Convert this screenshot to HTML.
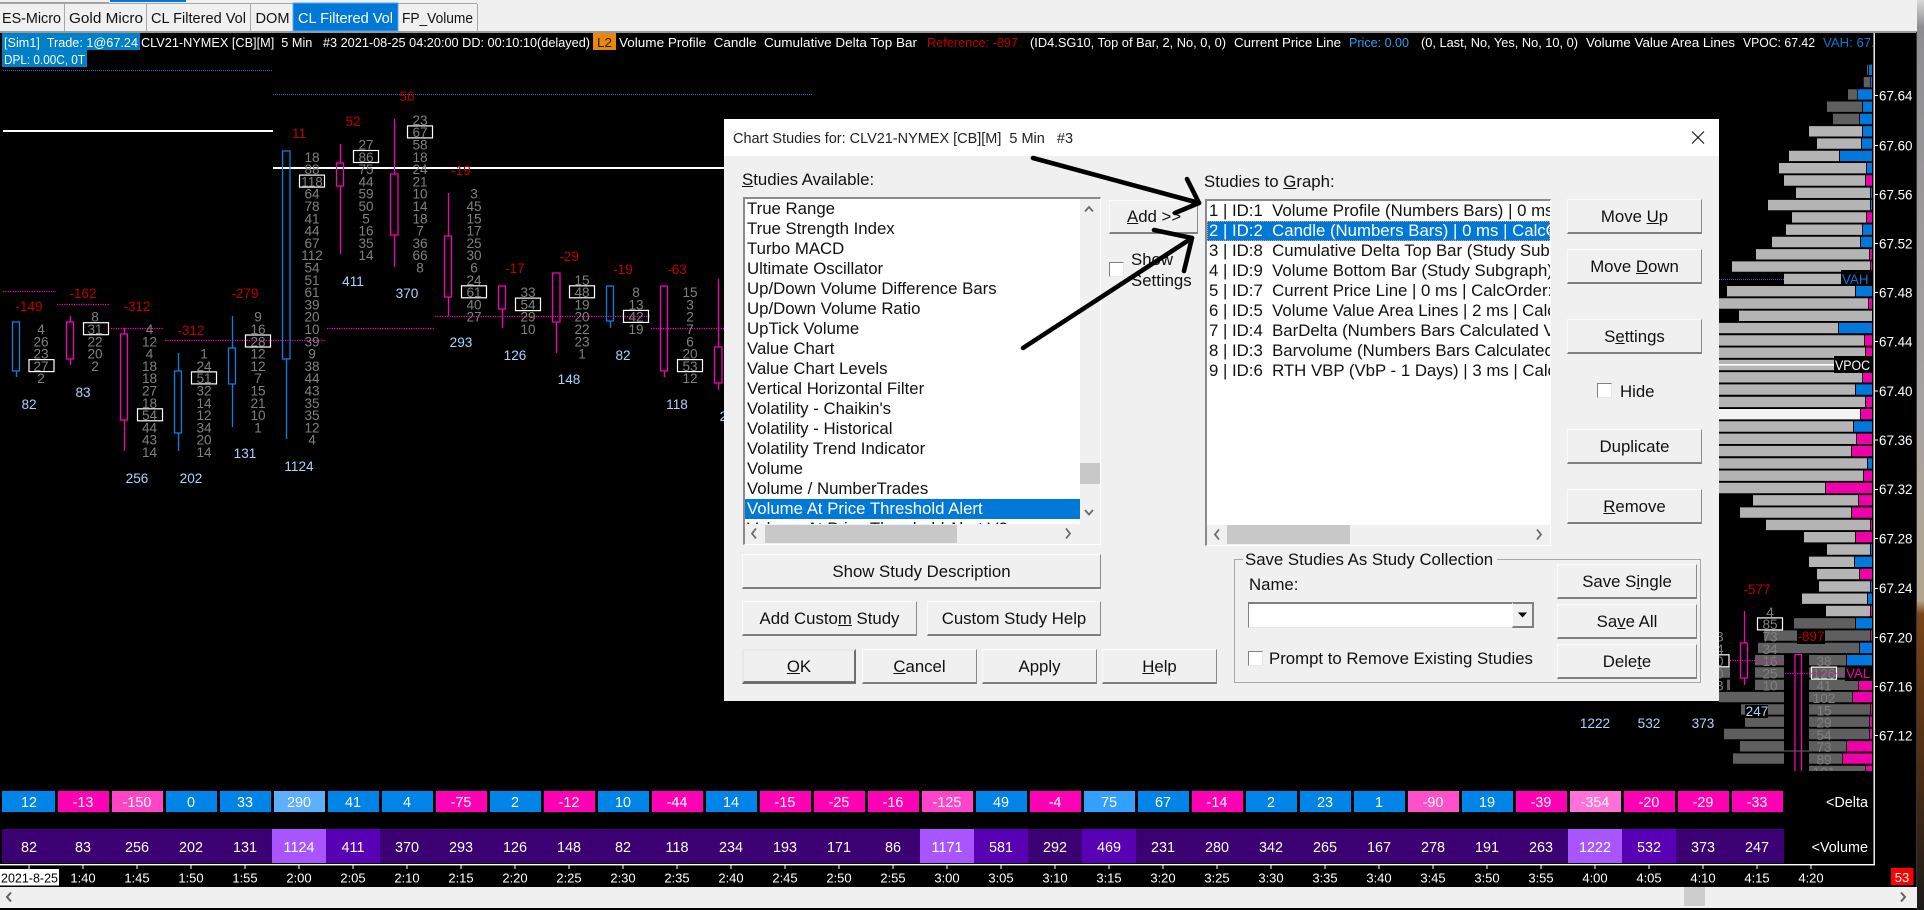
<!DOCTYPE html>
<html><head><meta charset="utf-8"><title>Chart Studies</title>
<style>
html,body{margin:0;padding:0;background:#000;width:1924px;height:910px;overflow:hidden}
body{position:relative;font-family:"Liberation Sans",sans-serif}
svg{position:absolute;left:0;top:0}
text{font-family:"Liberation Sans",sans-serif;white-space:pre}
.h{font-size:13.2px;fill:#fff}
.n{font-size:13.6px;fill:#808080;text-anchor:middle}
.d{font-size:13.4px;fill:#c00000;text-anchor:middle}
.t{font-size:13.6px;fill:#a8d4ff;text-anchor:middle}
.c{font-size:14.4px;fill:#fff;text-anchor:middle}
.x{font-size:13px;fill:#fff;text-anchor:middle}
.p{font-size:13.4px;fill:#fff}
.tb{font-size:14.4px;fill:#111}
.bx{fill:none;stroke:#fff;stroke-width:1.2}
.m{fill:none;stroke:#f400b8;stroke-width:1.3}
.bl{fill:none;stroke:#0a7fe0;stroke-width:1.3}
.dm{stroke:#ff00c0;stroke-width:1.2;stroke-dasharray:1.2 1.2}
.db{stroke:#0a78d8;stroke-width:1;stroke-dasharray:1 1}
#dlg{position:absolute;left:724px;top:119px;width:995px;height:582px;background:#f0f0f0}
#ttl{position:absolute;left:0;top:0;width:995px;height:37px;background:#fff}
.a{position:absolute;font-size:16.8px;color:#111;white-space:pre;line-height:20px;margin-top:1px}
.b{position:absolute;box-sizing:border-box;background:#f0f0f0;border:1px solid;border-color:#fbfbfb #8a8a8a #808080 #fbfbfb;border-bottom-width:2px;border-right-width:1px;text-align:center;font-size:16.8px;color:#111;line-height:33px;white-space:pre}
.lst{position:absolute;box-sizing:border-box;background:#f0f0f0;border:1px solid;border-color:#8a8a8a #fff #fff #8a8a8a;border-width:2px 1px 1px 2px}
.in{position:absolute;background:#fff;overflow:hidden;font-size:16.8px;line-height:20px;color:#111}
.in div{height:20px;padding-left:2px;white-space:pre}
.sel{background:#0078d7;color:#fff}
.th{position:absolute;background:#c8c8c8}
.ck{position:absolute;box-sizing:border-box;width:15px;height:15px;background:#fff;border:1px solid;border-color:#808080 #e8e8e8 #e8e8e8 #808080}
</style></head><body>

<svg width="1924" height="910" viewBox="0 0 1924 910">
<defs>
<linearGradient id="dk" x1="0" y1="0" x2="0" y2="1"><stop offset="0" stop-color="#d8d8d8"/><stop offset=".03" stop-color="#8e8e90"/><stop offset=".45" stop-color="#a8a4a4"/><stop offset=".66" stop-color="#b2a68e"/><stop offset=".675" stop-color="#7a4416"/><stop offset=".85" stop-color="#4a2c14"/><stop offset="1" stop-color="#1a1a1a"/></linearGradient>
<clipPath id="r55"><rect x="1700" y="600" width="180" height="171"/></clipPath>
<clipPath id="hd"><rect x="0" y="33" width="1873" height="20"/></clipPath>
</defs>

<!-- top bar -->
<rect x="0" y="0" width="1917" height="32" fill="#f0f0f0"/>
<rect x="0" y="2" width="109" height="1" fill="#a0a0a0"/>
<rect x="110" y="0" width="76" height="2" fill="#0078d7"/>
<rect x="0" y="31" width="1917" height="2" fill="#9a9a9a"/>
<path d="M64.5 4V31M146.5 4V31M250.5 4V31M477.5 4V31M0 3.5H477" stroke="#a8a8a8" fill="none"/>
<rect x="293" y="3" width="105" height="28" fill="#0078d7" stroke="#5aa8e8"/>
<text class="tb" x="2" y="23" textLength="59" lengthAdjust="spacingAndGlyphs">ES-Micro</text>
<text class="tb" x="69" y="23" textLength="74" lengthAdjust="spacingAndGlyphs">Gold Micro</text>
<text class="tb" x="151" y="23" textLength="95" lengthAdjust="spacingAndGlyphs">CL Filtered Vol</text>
<text class="tb" x="255.5" y="23" textLength="34" lengthAdjust="spacingAndGlyphs">DOM</text>
<text class="tb" x="298" y="23" textLength="95" lengthAdjust="spacingAndGlyphs" style="fill:#fff">CL Filtered Vol</text>
<text class="tb" x="402" y="23" textLength="71" lengthAdjust="spacingAndGlyphs">FP_Volume</text>

<!-- desktop edge -->
<rect x="1917" y="0" width="7" height="910" fill="url(#dk)"/>
<rect x="1916" y="32" width="1" height="877" fill="#333"/>

<!-- chart header -->
<rect x="2" y="33" width="138" height="17" fill="#0080c8"/>
<rect x="2" y="50" width="85" height="17" fill="#0080c8"/>
<rect x="593" y="33" width="23" height="17" fill="#e8870a"/>
<g clip-path="url(#hd)">
<text class="h" x="4" y="47" textLength="134" lengthAdjust="spacingAndGlyphs">[Sim1]  Trade: 1@67.24</text>
<text class="h" x="141" y="47" textLength="449" lengthAdjust="spacingAndGlyphs">CLV21-NYMEX [CB][M]  5 Min   #3 2021-08-25 04:20:00 DD: 00:10:10(delayed)</text>
<text class="h" x="597" y="47" textLength="15" lengthAdjust="spacingAndGlyphs" style="fill:#222">L2</text>
<text class="h" x="619" y="47" textLength="298" lengthAdjust="spacingAndGlyphs">Volume Profile  Candle  Cumulative Delta Top Bar</text>
<text class="h" x="927" y="47" textLength="91" lengthAdjust="spacingAndGlyphs" style="fill:#c00000">Reference: -897</text>
<text class="h" x="1030" y="47" textLength="196" lengthAdjust="spacingAndGlyphs">(ID4.SG10, Top of Bar, 2, No, 0, 0)</text>
<text class="h" x="1234" y="47" textLength="107" lengthAdjust="spacingAndGlyphs">Current Price Line</text>
<text class="h" x="1349" y="47" textLength="60" lengthAdjust="spacingAndGlyphs" style="fill:#2f9cf0">Price: 0.00</text>
<text class="h" x="1421" y="47" textLength="157" lengthAdjust="spacingAndGlyphs">(0, Last, No, Yes, No, 10, 0)</text>
<text class="h" x="1586" y="47" textLength="149" lengthAdjust="spacingAndGlyphs">Volume Value Area Lines</text>
<text class="h" x="1743" y="47" textLength="72" lengthAdjust="spacingAndGlyphs">VPOC: 67.42</text>
<text class="h" x="1823" y="47" style="fill:#0a78d8">VAH: 67.50</text>
</g>
<text class="h" x="4" y="64" textLength="81" lengthAdjust="spacingAndGlyphs">DPL: 0.00C, 0T</text>

<!-- horizontal lines -->
<path class="db" d="M3 70.5H272M273 94.5H812M1719 279.5H1841" fill="none"/>
<rect x="3" y="130" width="270" height="2" fill="#fff"/>
<rect x="273" y="167" width="460" height="2" fill="#fff"/>
<path class="dm" d="M3 291.5H56M57 304.5H110M111 328.5H164M165 340.5H326M327 328.5H434M435 316.5H650M651 328.5H730" fill="none"/>

<!-- volume profile -->
<path fill="#b4b4b4" d="M1809 126.1H1862v10.4H1809zM1817 138.4H1861v10.4H1817zM1789 150.7H1839v10.4H1789zM1779 163H1866v10.4H1779zM1784 175.3H1865v10.4H1784zM1796 187.6H1870v10.4H1796zM1768 199.9H1870v10.4H1768zM1792 212.2H1866v10.4H1792zM1786 224.5H1862v10.4H1786zM1772 236.8H1860v10.4H1772zM1756 249.1H1869v10.4H1756zM1732 261.4H1870v10.4H1732zM1784 273.7H1841v10.4H1784zM1727 286H1855v10.4H1727zM1719 298.3H1868v10.4H1719zM1739 310.6H1872v10.4H1739zM1719 322.9H1838v10.4H1719zM1719 335.2H1864v10.4H1719zM1719 347.5H1865v10.4H1719zM1719 359.8H1834v10.4H1719zM1719 372.1H1862v10.4H1719zM1719 384.4H1855v10.4H1719zM1719 396.7H1865v10.4H1719zM1719 421.3H1853v10.4H1719zM1719 433.6H1856v10.4H1719zM1719 445.9H1851v10.4H1719zM1719 458.2H1867v10.4H1719zM1719 470.5H1863v10.4H1719zM1719 482.8H1825v10.4H1719zM1753 495.1H1858v10.4H1753zM1740 507.4H1851v10.4H1740zM1766 519.7H1870v10.4H1766zM1804 532H1855v10.4H1804zM1827 544.3H1870v10.4H1827zM1809 556.6H1854v10.4H1809zM1817 568.9H1859v10.4H1817zM1819 581.2H1870v10.4H1819zM1802 593.5H1867v10.4H1802zM1826 605.8H1870v10.4H1826z"/>
<path fill="#f4f4f4" d="M1719 409H1860v10.4H1719z"/>
<path fill="#5f5f5f" d="M1867 64.6H1868v10.4H1867zM1863.7 76.9H1870.3v10.4H1863.7zM1848 89.2H1857.3v10.4H1848zM1827 101.5H1862v10.4H1827zM1833 113.8H1859v10.4H1833zM1794 618.1H1855v10.4H1794zM1764 630.4H1870v10.4H1764zM1758 642.7H1859v10.4H1758zM1755 655H1784v10.4H1755zM1809 655H1846v10.4H1809zM1755 667.3H1784v10.4H1755zM1719 667.3H1730v10.4H1719zM1809 667.3H1845v10.4H1809zM1727 679.6H1730v10.4H1727zM1755 679.6H1784v10.4H1755zM1809 679.6H1858v10.4H1809zM1719 691.9H1784v10.4H1719zM1809 691.9H1852v10.4H1809zM1741 704.2H1784v10.4H1741zM1809 704.2H1870v10.4H1809zM1745 716.5H1784v10.4H1745zM1809 716.5H1869v10.4H1809zM1724 728.8H1784v10.4H1724zM1809 728.8H1869v10.4H1809zM1740 741.1H1784v10.4H1740zM1809 741.1H1846v10.4H1809zM1733 753.4H1784v10.4H1733zM1809 753.4H1842v10.4H1809zM1809 765.7H1865v5.3H1809z"/>
<path fill="#0078dc" d="M1869 64.6H1872v10.4H1869zM1871 76.9H1872v10.4H1871zM1858 89.2H1872v10.4H1858zM1863 101.5H1872v10.4H1863zM1860 113.8H1872v10.4H1860zM1863 126.1H1872v10.4H1863zM1862 138.4H1872v10.4H1862zM1840 150.7H1872v10.4H1840zM1867 163H1872v10.4H1867zM1871 187.6H1872v10.4H1871zM1871 199.9H1872v10.4H1871zM1863 224.5H1872v10.4H1863zM1861 236.8H1872v10.4H1861zM1856 286H1872v10.4H1856zM1839 322.9H1872v10.4H1839zM1856 384.4H1872v10.4H1856zM1854 421.3H1872v10.4H1854zM1868 458.2H1872v10.4H1868zM1871 544.3H1872v10.4H1871zM1855 556.6H1872v10.4H1855zM1871 581.2H1872v10.4H1871zM1868 593.5H1872v10.4H1868zM1856 618.1H1872v10.4H1856zM1860 642.7H1872v10.4H1860zM1847 655H1872v10.4H1847z"/>
<path fill="#f000a8" d="M1866 175.3H1872v10.4H1866zM1867 212.2H1872v10.4H1867zM1870 249.1H1872v10.4H1870zM1871 261.4H1872v10.4H1871zM1869 298.3H1872v10.4H1869zM1865 335.2H1872v10.4H1865zM1866 347.5H1872v10.4H1866zM1863 372.1H1872v10.4H1863zM1866 396.7H1872v10.4H1866zM1861 409H1872v10.4H1861zM1857 433.6H1872v10.4H1857zM1852 445.9H1872v10.4H1852zM1864 470.5H1872v10.4H1864zM1826 482.8H1872v10.4H1826zM1859 495.1H1872v10.4H1859zM1852 507.4H1872v10.4H1852zM1871 519.7H1872v10.4H1871zM1856 532H1872v10.4H1856zM1860 568.9H1872v10.4H1860zM1871 605.8H1872v10.4H1871zM1871 630.4H1872v10.4H1871zM1859 679.6H1872v10.4H1859zM1853 691.9H1872v10.4H1853zM1871 704.2H1872v10.4H1871zM1870 716.5H1872v10.4H1870zM1870 728.8H1872v10.4H1870zM1847 741.1H1872v10.4H1847zM1843 753.4H1872v10.4H1843zM1866 765.7H1872v5.3H1866z"/>
<rect x="1719" y="364" width="115" height="1.6" fill="#fff"/>

<!-- candles -->
<g class="bl">
<rect x="12.5" y="322" width="7" height="49"/><path d="M16.5 371V377"/>
<rect x="174.5" y="371" width="7" height="62"/><path d="M178.5 353V371M178.5 433V451"/>
<rect x="228.5" y="348" width="7" height="36"/><path d="M232.5 316V348M232.5 384V427"/>
<rect x="282.5" y="151" width="7.5" height="208"/><path d="M286.5 359V439"/>
<rect x="606.5" y="286" width="7" height="35"/><path d="M610.5 321V328"/>
</g>
<g class="m">
<rect x="66.5" y="322" width="7" height="37"/><path d="M70.5 316V322M70.5 359V365"/>
<rect x="120.5" y="334" width="7" height="86"/><path d="M124.5 328V334M124.5 420V451"/>
<rect x="336.5" y="163" width="7" height="23"/><path d="M340.5 144V163M340.5 186V254"/>
<rect x="390.5" y="174" width="7.5" height="61"/><path d="M394.5 119V174M394.5 235V267"/>
<rect x="444.5" y="236" width="7" height="61"/><path d="M448.5 193V236M448.5 297V316"/>
<rect x="498.5" y="286" width="7" height="23"/><path d="M502.5 309V328"/>
<rect x="552.5" y="273" width="7.5" height="49"/><path d="M556.5 322V353"/>
<rect x="660.5" y="286" width="7" height="85"/><path d="M664.5 371V377"/>
<rect x="714.5" y="347" width="7.5" height="36"/><path d="M718.5 279V347M718.5 383V390"/>
<rect x="1740.5" y="643" width="7" height="35"/><path d="M1744.5 611V643M1744.5 678V685"/>
<path d="M1795 771V654.5H1801.5V771"/>
</g>
<rect x="1784" y="750.5" width="25" height="1" fill="#666"/>

<!-- numbers -->
<text class="n" y="334"><tspan x="41">4</tspan><tspan x="41" dy="12.3">26</tspan><tspan x="41" dy="12.3">23</tspan><tspan x="41" dy="12.3">27</tspan><tspan x="41" dy="12.3">2</tspan></text>
<text class="n" y="321.7"><tspan x="95">8</tspan><tspan x="95" dy="12.3">31</tspan><tspan x="95" dy="12.3">22</tspan><tspan x="95" dy="12.3">20</tspan><tspan x="95" dy="12.3">2</tspan></text>
<text class="n" y="334"><tspan x="149.5">4</tspan><tspan x="149.5" dy="12.3">12</tspan><tspan x="149.5" dy="12.3">4</tspan><tspan x="149.5" dy="12.3">18</tspan><tspan x="149.5" dy="12.3">18</tspan><tspan x="149.5" dy="12.3">27</tspan><tspan x="149.5" dy="12.3">18</tspan><tspan x="149.5" dy="12.3">54</tspan><tspan x="149.5" dy="12.3">44</tspan><tspan x="149.5" dy="12.3">43</tspan><tspan x="149.5" dy="12.3">14</tspan></text>
<text class="n" y="358.6"><tspan x="204">1</tspan><tspan x="204" dy="12.3">24</tspan><tspan x="204" dy="12.3">51</tspan><tspan x="204" dy="12.3">32</tspan><tspan x="204" dy="12.3">14</tspan><tspan x="204" dy="12.3">12</tspan><tspan x="204" dy="12.3">34</tspan><tspan x="204" dy="12.3">20</tspan><tspan x="204" dy="12.3">14</tspan></text>
<text class="n" y="321.7"><tspan x="258">9</tspan><tspan x="258" dy="12.3">16</tspan><tspan x="258" dy="12.3">28</tspan><tspan x="258" dy="12.3">12</tspan><tspan x="258" dy="12.3">12</tspan><tspan x="258" dy="12.3">7</tspan><tspan x="258" dy="12.3">15</tspan><tspan x="258" dy="12.3">21</tspan><tspan x="258" dy="12.3">10</tspan><tspan x="258" dy="12.3">1</tspan></text>
<text class="n" y="161.8"><tspan x="312">18</tspan><tspan x="312" dy="12.3">88</tspan><tspan x="312" dy="12.3">118</tspan><tspan x="312" dy="12.3">64</tspan><tspan x="312" dy="12.3">78</tspan><tspan x="312" dy="12.3">41</tspan><tspan x="312" dy="12.3">44</tspan><tspan x="312" dy="12.3">67</tspan><tspan x="312" dy="12.3">112</tspan><tspan x="312" dy="12.3">54</tspan><tspan x="312" dy="12.3">51</tspan><tspan x="312" dy="12.3">61</tspan><tspan x="312" dy="12.3">39</tspan><tspan x="312" dy="12.3">20</tspan><tspan x="312" dy="12.3">10</tspan><tspan x="312" dy="12.3">39</tspan><tspan x="312" dy="12.3">9</tspan><tspan x="312" dy="12.3">38</tspan><tspan x="312" dy="12.3">44</tspan><tspan x="312" dy="12.3">43</tspan><tspan x="312" dy="12.3">35</tspan><tspan x="312" dy="12.3">35</tspan><tspan x="312" dy="12.3">12</tspan><tspan x="312" dy="12.3">4</tspan></text>
<text class="n" y="149.5"><tspan x="366">27</tspan><tspan x="366" dy="12.3">86</tspan><tspan x="366" dy="12.3">75</tspan><tspan x="366" dy="12.3">44</tspan><tspan x="366" dy="12.3">59</tspan><tspan x="366" dy="12.3">50</tspan><tspan x="366" dy="12.3">5</tspan><tspan x="366" dy="12.3">16</tspan><tspan x="366" dy="12.3">35</tspan><tspan x="366" dy="12.3">14</tspan></text>
<text class="n" y="124.9"><tspan x="420">23</tspan><tspan x="420" dy="12.3">67</tspan><tspan x="420" dy="12.3">58</tspan><tspan x="420" dy="12.3">18</tspan><tspan x="420" dy="12.3">24</tspan><tspan x="420" dy="12.3">21</tspan><tspan x="420" dy="12.3">10</tspan><tspan x="420" dy="12.3">14</tspan><tspan x="420" dy="12.3">18</tspan><tspan x="420" dy="12.3">7</tspan><tspan x="420" dy="12.3">36</tspan><tspan x="420" dy="12.3">66</tspan><tspan x="420" dy="12.3">8</tspan></text>
<text class="n" y="198.7"><tspan x="474">3</tspan><tspan x="474" dy="12.3">45</tspan><tspan x="474" dy="12.3">15</tspan><tspan x="474" dy="12.3">17</tspan><tspan x="474" dy="12.3">25</tspan><tspan x="474" dy="12.3">30</tspan><tspan x="474" dy="12.3">6</tspan><tspan x="474" dy="12.3">24</tspan><tspan x="474" dy="12.3">61</tspan><tspan x="474" dy="12.3">40</tspan><tspan x="474" dy="12.3">27</tspan></text>
<text class="n" y="297.1"><tspan x="528">33</tspan><tspan x="528" dy="12.3">54</tspan><tspan x="528" dy="12.3">29</tspan><tspan x="528" dy="12.3">10</tspan></text>
<text class="n" y="284.8"><tspan x="582">15</tspan><tspan x="582" dy="12.3">48</tspan><tspan x="582" dy="12.3">19</tspan><tspan x="582" dy="12.3">20</tspan><tspan x="582" dy="12.3">22</tspan><tspan x="582" dy="12.3">23</tspan><tspan x="582" dy="12.3">1</tspan></text>
<text class="n" y="297.1"><tspan x="636">8</tspan><tspan x="636" dy="12.3">13</tspan><tspan x="636" dy="12.3">42</tspan><tspan x="636" dy="12.3">19</tspan></text>
<text class="n" y="297.1"><tspan x="690">15</tspan><tspan x="690" dy="12.3">3</tspan><tspan x="690" dy="12.3">2</tspan><tspan x="690" dy="12.3">7</tspan><tspan x="690" dy="12.3">6</tspan><tspan x="690" dy="12.3">20</tspan><tspan x="690" dy="12.3">53</tspan><tspan x="690" dy="12.3">12</tspan></text>
<text class="n" y="641.5"><tspan x="1716">13</tspan><tspan x="1716" dy="12.3">14</tspan><tspan x="1716" dy="12.3">70</tspan><tspan x="1716" dy="12.3">40</tspan><tspan x="1716" dy="12.3">13</tspan></text>
<text class="n" y="616.9"><tspan x="1770">4</tspan><tspan x="1770" dy="12.3">85</tspan><tspan x="1770" dy="12.3">73</tspan><tspan x="1770" dy="12.3">34</tspan><tspan x="1770" dy="12.3">16</tspan><tspan x="1770" dy="12.3">25</tspan><tspan x="1770" dy="12.3">10</tspan></text>
<g clip-path="url(#r55)"><text class="n" y="666.1"><tspan x="1824">38</tspan><tspan x="1824" dy="12.3">126</tspan><tspan x="1824" dy="12.3">41</tspan><tspan x="1824" dy="12.3">102</tspan><tspan x="1824" dy="12.3">15</tspan><tspan x="1824" dy="12.3">29</tspan><tspan x="1824" dy="12.3">54</tspan><tspan x="1824" dy="12.3">73</tspan><tspan x="1824" dy="12.3">89</tspan><tspan x="1824" dy="12.3">101</tspan></text></g>

<!-- POC boxes -->
<rect class="bx" x="29" y="359.6" width="25" height="12"/>
<rect class="bx" x="83.5" y="322.7" width="25" height="12"/>
<rect class="bx" x="137.5" y="408.8" width="25" height="12"/>
<rect class="bx" x="191.5" y="371.9" width="25" height="12"/>
<rect class="bx" x="245.5" y="335" width="25" height="12"/>
<rect class="bx" x="299.5" y="175.1" width="25" height="12"/>
<rect class="bx" x="353.5" y="150.5" width="25" height="12"/>
<rect class="bx" x="407.5" y="125.9" width="25" height="12"/>
<rect class="bx" x="461.5" y="285.8" width="25" height="12"/>
<rect class="bx" x="515.5" y="298.1" width="25" height="12.5"/>
<rect class="bx" x="569.5" y="285.8" width="25" height="12"/>
<rect class="bx" x="623.5" y="310.4" width="25" height="12"/>
<rect class="bx" x="677.5" y="359.6" width="25" height="12"/>
<rect class="bx" x="1703" y="654.8" width="26" height="12"/>
<rect class="bx" x="1757.5" y="617.9" width="25" height="12"/>
<rect class="bx" x="1811.5" y="667.1" width="25" height="12"/>
<path class="dm" d="M1730 660.5H1784M1785 673.5H1846" fill="none"/>

<!-- deltas -->
<text class="d" x="29" y="311">-149</text><text class="d" x="83" y="298">-162</text><text class="d" x="137" y="311">-312</text><text class="d" x="191" y="335">-312</text><text class="d" x="245" y="298">-279</text><text class="d" x="299" y="138">11</text><text class="d" x="353" y="126">52</text><text class="d" x="407" y="101">56</text><text class="d" x="461" y="175">-19</text><text class="d" x="515" y="273">-17</text><text class="d" x="569" y="261">-29</text><text class="d" x="623" y="274">-19</text><text class="d" x="677" y="274">-63</text><text class="d" x="1757" y="594">-577</text>

<!-- totals -->
<text class="t" x="29" y="409">82</text><text class="t" x="83" y="397">83</text><text class="t" x="137" y="483">256</text><text class="t" x="191" y="483">202</text><text class="t" x="245" y="458">131</text><text class="t" x="299" y="471">1124</text><text class="t" x="353" y="286">411</text><text class="t" x="407" y="298">370</text><text class="t" x="461" y="347">293</text><text class="t" x="515" y="360">126</text><text class="t" x="569" y="384">148</text><text class="t" x="623" y="360">82</text><text class="t" x="677" y="409">118</text><text class="t" x="731" y="421">234</text><text class="t" x="1595" y="728">1222</text><text class="t" x="1649" y="728">532</text><text class="t" x="1703" y="728">373</text>

<!-- labels on profile -->
<rect x="1841" y="270" width="31" height="16" fill="#000"/><text x="1842" y="284" style="font-size:13.4px;fill:#0a78d8">VAH</text>
<rect x="1834" y="356" width="38" height="17" fill="#000"/><text x="1835" y="370" textLength="35" lengthAdjust="spacingAndGlyphs" style="font-size:13.4px;fill:#fff">VPOC</text>
<rect x="1797" y="629" width="28" height="15" fill="#000"/><text x="1811" y="641" class="d">-897</text>
<rect x="1845" y="666" width="27" height="15" fill="#000"/><text x="1846" y="678" style="font-size:13.4px;fill:#f000a8">VAL</text>
<rect x="1745" y="705" width="23" height="13" fill="#000"/><text class="t" x="1757" y="716">247</text>

<!-- axis -->
<rect x="1873.5" y="33" width="1.4" height="832" fill="#fff"/>
<path d="M1875 95.5h3M1875 145.5h3M1875 194.5h3M1875 243.5h3M1875 292.5h3M1875 341.5h3M1875 391h3M1875 440h3M1875 489.5h3M1875 538.5h3M1875 588.5h3M1875 637.5h3M1875 686.5h3M1875 735.5h3" stroke="#fff"/>
<text class="p" x="1879" y="100.5">67.64</text><text class="p" x="1879" y="150.5">67.60</text><text class="p" x="1879" y="199.5">67.56</text><text class="p" x="1879" y="248.5">67.52</text><text class="p" x="1879" y="297.5">67.48</text><text class="p" x="1879" y="346.5">67.44</text><text class="p" x="1879" y="396">67.40</text><text class="p" x="1879" y="445">67.36</text><text class="p" x="1879" y="494">67.32</text><text class="p" x="1879" y="543.5">67.28</text><text class="p" x="1879" y="593">67.24</text><text class="p" x="1879" y="642.5">67.20</text><text class="p" x="1879" y="691.5">67.16</text><text class="p" x="1879" y="740.5">67.12</text>

<!-- delta row -->
<path fill="#0084e8" d="M2 791h53v21H2zM166 791h51v21h-51zM220 791h51v21h-51zM328 791h51v21h-51zM382 791h51v21h-51zM490 791h51v21h-51zM598 791h51v21h-51zM706 791h51v21h-51zM976 791h51v21h-51zM1138 791h51v21h-51zM1246 791h51v21h-51zM1300 791h51v21h-51zM1354 791h51v21h-51zM1462 791h51v21h-51z"/>
<path fill="#ff00b4" d="M58 791h51v21H58zM436 791h51v21h-51zM544 791h51v21h-51zM652 791h51v21h-51zM760 791h51v21h-51zM814 791h51v21h-51zM868 791h51v21h-51zM1030 791h51v21h-51zM1192 791h51v21h-51zM1516 791h51v21h-51zM1624 791h51v21h-51zM1678 791h51v21h-51zM1732 791h51v21h-51z"/>
<rect x="112" y="791" width="51" height="21" fill="#ff44c8"/>
<rect x="274" y="791" width="51" height="21" fill="#5cb0ff"/>
<rect x="922" y="791" width="51" height="21" fill="#ff44cc"/>
<rect x="1084" y="791" width="51" height="21" fill="#33a0ff"/>
<rect x="1408" y="791" width="51" height="21" fill="#ff50cc"/>
<rect x="1570" y="791" width="51" height="21" fill="#ff70d8"/>
<g class="c"><text class="c" x="29" y="807">12</text><text class="c" x="83" y="807">-13</text><text class="c" x="137" y="807">-150</text><text class="c" x="191" y="807">0</text><text class="c" x="245" y="807">33</text><text class="c" x="299" y="807">290</text><text class="c" x="353" y="807">41</text><text class="c" x="407" y="807">4</text><text class="c" x="461" y="807">-75</text><text class="c" x="515" y="807">2</text><text class="c" x="569" y="807">-12</text><text class="c" x="623" y="807">10</text><text class="c" x="677" y="807">-44</text><text class="c" x="731" y="807">14</text><text class="c" x="785" y="807">-15</text><text class="c" x="839" y="807">-25</text><text class="c" x="893" y="807">-16</text><text class="c" x="947" y="807">-125</text><text class="c" x="1001" y="807">49</text><text class="c" x="1055" y="807">-4</text><text class="c" x="1109" y="807">75</text><text class="c" x="1163" y="807">67</text><text class="c" x="1217" y="807">-14</text><text class="c" x="1271" y="807">2</text><text class="c" x="1325" y="807">23</text><text class="c" x="1379" y="807">1</text><text class="c" x="1433" y="807">-90</text><text class="c" x="1487" y="807">19</text><text class="c" x="1541" y="807">-39</text><text class="c" x="1595" y="807">-354</text><text class="c" x="1649" y="807">-20</text><text class="c" x="1703" y="807">-29</text><text class="c" x="1757" y="807">-33</text></g>
<text x="1868" y="807" text-anchor="end" style="font-size:14.4px;fill:#fff">&lt;Delta</text>

<!-- volume row -->
<rect x="2" y="829" width="1782" height="34" fill="#3b0072"/>
<path fill="#a855ff" d="M272 829h54v34h-54zM920 829h54v34h-54zM1568 829h54v34h-54z"/>
<path fill="#5800b4" d="M326 829h54v34h-54zM974 829h54v34h-54zM1082 829h54v34h-54zM1622 829h54v34h-54z"/>
<text class="c" x="29" y="852">82</text><text class="c" x="83" y="852">83</text><text class="c" x="137" y="852">256</text><text class="c" x="191" y="852">202</text><text class="c" x="245" y="852">131</text><text class="c" x="299" y="852">1124</text><text class="c" x="353" y="852">411</text><text class="c" x="407" y="852">370</text><text class="c" x="461" y="852">293</text><text class="c" x="515" y="852">126</text><text class="c" x="569" y="852">148</text><text class="c" x="623" y="852">82</text><text class="c" x="677" y="852">118</text><text class="c" x="731" y="852">234</text><text class="c" x="785" y="852">193</text><text class="c" x="839" y="852">171</text><text class="c" x="893" y="852">86</text><text class="c" x="947" y="852">1171</text><text class="c" x="1001" y="852">581</text><text class="c" x="1055" y="852">292</text><text class="c" x="1109" y="852">469</text><text class="c" x="1163" y="852">231</text><text class="c" x="1217" y="852">280</text><text class="c" x="1271" y="852">342</text><text class="c" x="1325" y="852">265</text><text class="c" x="1379" y="852">167</text><text class="c" x="1433" y="852">278</text><text class="c" x="1487" y="852">191</text><text class="c" x="1541" y="852">263</text><text class="c" x="1595" y="852">1222</text><text class="c" x="1649" y="852">532</text><text class="c" x="1703" y="852">373</text><text class="c" x="1757" y="852">247</text>
<text x="1868" y="852" text-anchor="end" style="font-size:14.4px;fill:#fff">&lt;Volume</text>

<!-- time axis -->
<rect x="0" y="864" width="1875" height="1.4" fill="#fff"/>
<path stroke="#fff" d="M29 865v4M83 865v4M137 865v4M191 865v4M245 865v4M299 865v4M353 865v4M407 865v4M461 865v4M515 865v4M569 865v4M623 865v4M677 865v4M731 865v4M785 865v4M839 865v4M893 865v4M947 865v4M1001 865v4M1055 865v4M1109 865v4M1163 865v4M1217 865v4M1271 865v4M1325 865v4M1379 865v4M1433 865v4M1487 865v4M1541 865v4M1595 865v4M1649 865v4M1703 865v4M1757 865v4M1811 865v4"/>
<rect x="0" y="869" width="59" height="16.5" fill="#fff"/>
<text x="1" y="882.5" textLength="57" lengthAdjust="spacingAndGlyphs" style="font-size:13px;fill:#000">2021-8-25</text>
<text class="x" x="83" y="882.5">1:40</text><text class="x" x="137" y="882.5">1:45</text><text class="x" x="191" y="882.5">1:50</text><text class="x" x="245" y="882.5">1:55</text><text class="x" x="299" y="882.5">2:00</text><text class="x" x="353" y="882.5">2:05</text><text class="x" x="407" y="882.5">2:10</text><text class="x" x="461" y="882.5">2:15</text><text class="x" x="515" y="882.5">2:20</text><text class="x" x="569" y="882.5">2:25</text><text class="x" x="623" y="882.5">2:30</text><text class="x" x="677" y="882.5">2:35</text><text class="x" x="731" y="882.5">2:40</text><text class="x" x="785" y="882.5">2:45</text><text class="x" x="839" y="882.5">2:50</text><text class="x" x="893" y="882.5">2:55</text><text class="x" x="947" y="882.5">3:00</text><text class="x" x="1001" y="882.5">3:05</text><text class="x" x="1055" y="882.5">3:10</text><text class="x" x="1109" y="882.5">3:15</text><text class="x" x="1163" y="882.5">3:20</text><text class="x" x="1217" y="882.5">3:25</text><text class="x" x="1271" y="882.5">3:30</text><text class="x" x="1325" y="882.5">3:35</text><text class="x" x="1379" y="882.5">3:40</text><text class="x" x="1433" y="882.5">3:45</text><text class="x" x="1487" y="882.5">3:50</text><text class="x" x="1541" y="882.5">3:55</text><text class="x" x="1595" y="882.5">4:00</text><text class="x" x="1649" y="882.5">4:05</text><text class="x" x="1703" y="882.5">4:10</text><text class="x" x="1757" y="882.5">4:15</text><text class="x" x="1811" y="882.5">4:20</text>
<rect x="1891" y="868" width="22.5" height="17" fill="#ff0000"/>
<text x="1902" y="882" text-anchor="middle" style="font-size:13px;fill:#fff">53</text>

<!-- bottom scrollbar -->
<rect x="0" y="887" width="1917" height="21" fill="#f0f0f0"/>
<rect x="1684" y="887" width="21" height="19" fill="#cdcdcd"/>
<path d="M11 892.5L7 897L11 901.5M1901 892.5L1905 897L1901 901.5" stroke="#606060" stroke-width="2" fill="none"/>
</svg>

<div id="dlg">
<div id="ttl"></div>
</div>

<div class="a" style="left:742px;top:169px"><u>S</u>tudies Available:</div>
<div class="a" style="left:1204px;top:171px">Studies to <u>G</u>raph:</div>

<div class="lst" style="left:743px;top:197px;width:358px;height:348px"></div>
<div class="in" style="left:745px;top:199px;width:334.5px;height:325px">
<div>True Range</div>
<div>True Strength Index</div>
<div>Turbo MACD</div>
<div>Ultimate Oscillator</div>
<div>Up/Down Volume Difference Bars</div>
<div>Up/Down Volume Ratio</div>
<div>UpTick Volume</div>
<div>Value Chart</div>
<div>Value Chart Levels</div>
<div>Vertical Horizontal Filter</div>
<div>Volatility - Chaikin's</div>
<div>Volatility - Historical</div>
<div>Volatility Trend Indicator</div>
<div>Volume</div>
<div>Volume / NumberTrades</div>
<div class="sel">Volume At Price Threshold Alert</div>
<div>Volume At Price Threshold Alert V2</div>
</div>
<div class="th" style="left:1080px;top:463px;width:19.5px;height:21px"></div>
<div class="th" style="left:765px;top:525px;width:192px;height:18px"></div>

<div class="lst" style="left:1205px;top:199px;width:346px;height:347px"></div>
<div class="in" style="left:1207px;top:201px;width:343px;height:324px">
<div>1 | ID:1  Volume Profile (Numbers Bars) | 0 ms | CalcOrder: 1</div>
<div class="sel" style="outline:1px dotted #f0a060;outline-offset:-1px">2 | ID:2  Candle (Numbers Bars) | 0 ms | CalcOrder: 2</div>
<div>3 | ID:8  Cumulative Delta Top Bar (Study Subgraph)</div>
<div>4 | ID:9  Volume Bottom Bar (Study Subgraph) | 0 ms</div>
<div>5 | ID:7  Current Price Line | 0 ms | CalcOrder: 5</div>
<div>6 | ID:5  Volume Value Area Lines | 2 ms | CalcOrder: 6</div>
<div>7 | ID:4  BarDelta (Numbers Bars Calculated Values)</div>
<div>8 | ID:3  Barvolume (Numbers Bars Calculated Values)</div>
<div>9 | ID:6  RTH VBP (VbP - 1 Days) | 3 ms | CalcOrder: 9</div>
</div>
<div class="th" style="left:1227px;top:525px;width:123px;height:19px"></div>

<div class="b" style="left:1109px;top:200px;width:89px;height:34px;line-height:32px;text-align:left;padding-left:17px"><u>A</u>dd &gt;&gt;</div>
<div class="ck" style="left:1109px;top:262px"></div>
<div class="a" style="left:1131px;top:248px;line-height:21px">Show
Settings</div>

<div class="b" style="left:1567px;top:199px;width:135px;height:35px">Move <u>U</u>p</div>
<div class="b" style="left:1567px;top:249px;width:135px;height:35px">Move <u>D</u>own</div>
<div class="b" style="left:1567px;top:319px;width:135px;height:35px">S<u>e</u>ttings</div>
<div class="ck" style="left:1597px;top:383px"></div>
<div class="a" style="left:1620px;top:381px">Hide</div>
<div class="b" style="left:1567px;top:429px;width:135px;height:35px">Duplicate</div>
<div class="b" style="left:1567px;top:489px;width:135px;height:35px"><u>R</u>emove</div>

<div class="b" style="left:742px;top:554px;width:359px;height:35px">Show Study Description</div>
<div class="b" style="left:742px;top:601px;width:175px;height:35px">Add Custo<u>m</u> Study</div>
<div class="b" style="left:927px;top:601px;width:174px;height:35px">Custom Study Help</div>
<div class="b" style="left:742px;top:649px;width:114px;height:35px;border:2px solid #6e6e6e;border-top-color:#e8e8e8;border-left-color:#e8e8e8;border-bottom-width:3px;line-height:31px"><u>O</u>K</div>
<div class="b" style="left:862px;top:649px;width:115px;height:35px"><u>C</u>ancel</div>
<div class="b" style="left:982px;top:649px;width:115px;height:35px">Apply</div>
<div class="b" style="left:1102px;top:649px;width:115px;height:35px"><u>H</u>elp</div>

<div style="position:absolute;box-sizing:border-box;left:1234px;top:559px;width:467px;height:124px;border:1px solid #a8a8a8"></div>
<div class="a" style="left:1243px;top:549px;background:#f0f0f0;padding:0 2px;width:250px">Save Studies As Study Collection</div>
<div class="a" style="left:1249px;top:574px">Name:</div>
<div style="position:absolute;box-sizing:border-box;left:1248px;top:602px;width:286px;height:26px;background:#fff;border:1px solid;border-color:#808080 #e8e8e8 #e8e8e8 #808080;border-width:2px 1px 1px 1px"></div>
<div style="position:absolute;box-sizing:border-box;left:1512px;top:602px;width:22px;height:26px;background:#f0f0f0;border:1px solid;border-color:#808080 #808080 #808080 #fff;border-width:2px 2px 2px 1px"></div>
<div class="ck" style="left:1248px;top:651px"></div>
<div class="a" style="left:1269px;top:648px">Prompt to Remove Existing Studies</div>
<div class="b" style="left:1557px;top:564px;width:140px;height:35px">Save S<u>i</u>ngle</div>
<div class="b" style="left:1557px;top:604px;width:140px;height:35px">Sa<u>v</u>e All</div>
<div class="b" style="left:1557px;top:644px;width:140px;height:35px">Dele<u>t</u>e</div>

<svg width="1924" height="910" viewBox="0 0 1924 910" style="pointer-events:none">
<text x="733" y="143" textLength="340" lengthAdjust="spacingAndGlyphs" style="font-size:15px;fill:#222">Chart Studies for: CLV21-NYMEX [CB][M]  5 Min   #3</text>
<path d="M1692 131.5L1704 143.5M1704 131.5L1692 143.5" stroke="#111" stroke-width="1.1" fill="none"/>
<g stroke="#6a6a6a" stroke-width="1.8" fill="none">
<path d="M1085 211.5L1089 207L1093 211.5"/>
<path d="M1085 510L1089 514.5L1093 510"/>
<path d="M756 528.5L752 533.5L756 538.5"/>
<path d="M1066 528.5L1070 533.5L1066 538.5"/>
<path d="M1219 529.5L1215 534.5L1219 539.5"/>
<path d="M1537 529.5L1541 534.5L1537 539.5"/>
</g>
<path d="M1518 612.5H1527L1522.5 617.5Z" fill="#000"/>
<g stroke="#000" stroke-width="4.6" fill="none" stroke-linecap="round" stroke-linejoin="round">
<path d="M1033 158L1199 203"/>
<path d="M1187 179L1199 203L1175 213"/>
<path d="M1023 348L1192 238"/>
<path d="M1154 230L1192 238L1184 271"/>
</g>
</svg>
</body></html>
